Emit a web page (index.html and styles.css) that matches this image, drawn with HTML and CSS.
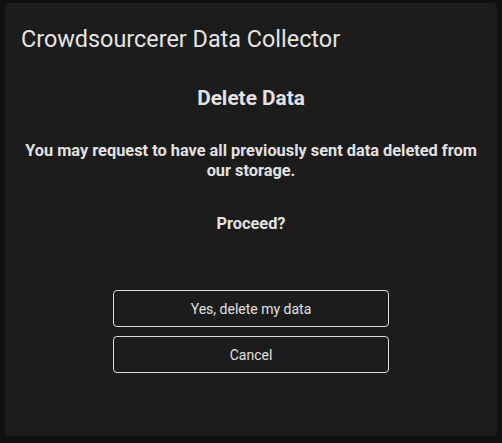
FILE: index.html
```html
<!DOCTYPE html>
<html>
<head>
<meta charset="utf-8">
<link rel="stylesheet" href="styles.css">
</head>
<body>
<div class="panel">
  <h1 class="title">Crowdsourcerer Data Collector</h1>
  <h2 class="heading">Delete Data</h2>
  <p class="text">You may request to have all previously sent data deleted from our storage.</p>
  <p class="text proceed">Proceed?</p>
  <div class="actions">
    <button class="btn">Yes, delete my data</button>
    <button class="btn">Cancel</button>
  </div>
</div>
</body>
</html>
```
FILE: styles.css
```css
html, body {
  margin: 0;
  height: 443px;
  background: #111111;
}
body {
  padding: 3px 5px 7px 5px;
  box-sizing: border-box;
  font-family: Roboto, "Noto Sans", sans-serif;
  color: #e2e2e2;
}
.panel {
  background: #1c1c1c;
  border-radius: 4px;
  height: 433px;
  box-sizing: border-box;
  padding: 22px 16px 0 16px;
  display: flex;
  flex-direction: column;
}
.title {
  margin: 0;
  font-size: 23.4px;
  font-weight: 400;
  line-height: 28px;
  color: #e4e4e4;
}
.heading {
  margin: 33px 0 0 0;
  font-size: 20.8px;
  font-weight: 700;
  line-height: 24px;
  text-align: center;
}
.text {
  margin: 31px 0 0 0;
  font-size: 16.35px;
  font-weight: 700;
  line-height: 20px;
  text-align: center;
}
.proceed {
  margin-top: 33px;
}
.actions {
  margin-top: 56px;
  display: flex;
  flex-direction: column;
  align-items: center;
  gap: 9px;
}
.btn {
  width: 276px;
  height: 37px;
  background: transparent;
  border: 1px solid #dcdcdc;
  border-radius: 4px;
  color: #e0e0e0;
  font-family: Roboto, sans-serif;
  font-size: 14px;
  padding: 0;
}
```
